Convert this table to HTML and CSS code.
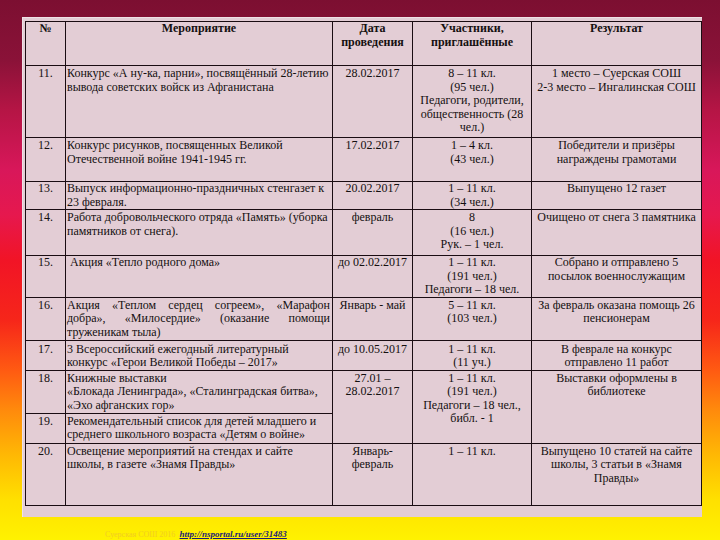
FILE: index.html
```html
<!DOCTYPE html>
<html lang="ru">
<head>
<meta charset="utf-8">
<title>Мероприятия</title>
<link rel="stylesheet" href="styles.css">
</head>
<body>
<div class="slide">
  <div class="panel">
    <table class="plan">
      <colgroup>
        <col class="c-num"><col class="c-event"><col class="c-date"><col class="c-who"><col class="c-res">
      </colgroup>
      <thead>
        <tr class="r-head">
          <th>№</th>
          <th>Мероприятие</th>
          <th>Дата<br>проведения</th>
          <th>Участники,<br>приглашённые</th>
          <th>Результат</th>
        </tr>
      </thead>
      <tbody>
        <tr class="r11">
          <td class="num">11.</td>
          <td class="ev">Конкурс «А ну-ка, парни», посвящённый 28-летию<br>вывода советских войск из Афганистана</td>
          <td class="ct">28.02.2017</td>
          <td class="ct">8 – 11 кл.<br>(95 чел.)<br>Педагоги, родители,<br>общественность (28<br>чел.)</td>
          <td class="ct">1 место – Суерская СОШ<br>2-3 место – Ингалинская СОШ</td>
        </tr>
        <tr class="r12">
          <td class="num">12.</td>
          <td class="ev">Конкурс рисунков, посвященных Великой<br>Отечественной войне 1941-1945 гг.</td>
          <td class="ct">17.02.2017</td>
          <td class="ct">1 – 4 кл.<br>(43 чел.)</td>
          <td class="ct">Победители и призёры<br>награждены грамотами</td>
        </tr>
        <tr class="r13">
          <td class="num">13.</td>
          <td class="ev">Выпуск информационно-праздничных стенгазет к<br>23 февраля.</td>
          <td class="ct">20.02.2017</td>
          <td class="ct">1 – 11 кл.<br>(34 чел.)</td>
          <td class="ct">Выпущено 12 газет</td>
        </tr>
        <tr class="r14">
          <td class="num">14.</td>
          <td class="ev">Работа добровольческого отряда «Память» (уборка<br>памятников от снега).</td>
          <td class="ct">февраль</td>
          <td class="ct">8<br>(16 чел.)<br>Рук. – 1 чел.</td>
          <td class="ct">Очищено от снега 3 памятника</td>
        </tr>
        <tr class="r15">
          <td class="num">15.</td>
          <td class="ev">&nbsp;Акция «Тепло родного дома»</td>
          <td class="ct">до 02.02.2017</td>
          <td class="ct">1 – 11 кл.<br>(191 чел.)<br>Педагоги – 18 чел.</td>
          <td class="ct">Собрано и отправлено 5<br>посылок военнослужащим</td>
        </tr>
        <tr class="r16">
          <td class="num">16.</td>
          <td class="ev"><span class="jl">Акция «Теплом сердец согреем», «Марафон</span><span class="jl">добра», «Милосердие» (оказание помощи</span><span class="ll">труженикам тыла)</span></td>
          <td class="ct">Январь - май</td>
          <td class="ct">5 – 11 кл.<br>(103 чел.)</td>
          <td class="ct">За февраль оказана помощь 26<br>пенсионерам</td>
        </tr>
        <tr class="r17">
          <td class="num">17.</td>
          <td class="ev">3 Всероссийский ежегодный литературный<br>конкурс «Герои Великой Победы – 2017»</td>
          <td class="ct">до 10.05.2017</td>
          <td class="ct">1 – 11 кл.<br>(11 уч.)</td>
          <td class="ct">В феврале на конкурс<br>отправлено 11 работ</td>
        </tr>
        <tr class="r18">
          <td class="num">18.</td>
          <td class="ev">Книжные выставки<br>«Блокада Ленинграда», «Сталинградская битва»,<br>«Эхо афганских гор»</td>
          <td class="ct" rowspan="2">27.01 –<br>28.02.2017</td>
          <td class="ct" rowspan="2">1 – 11 кл.<br>(191 чел.)<br>Педагоги – 18 чел.,<br>библ. - 1</td>
          <td class="ct" rowspan="2">Выставки оформлены в<br>библиотеке</td>
        </tr>
        <tr class="r19">
          <td class="num">19.</td>
          <td class="ev">Рекомендательный список для детей младшего и<br>среднего школьного возраста «Детям о войне»</td>
        </tr>
        <tr class="r20">
          <td class="num">20.</td>
          <td class="ev">Освещение мероприятий на стендах и сайте<br>школы, в газете «Знамя Правды»</td>
          <td class="ct">Январь-<br>февраль</td>
          <td class="ct">1 – 11 кл.</td>
          <td class="ct">Выпущено 10 статей на сайте<br>школы, 3 статьи в «Знамя<br>Правды»</td>
        </tr>
      </tbody>
    </table>
  </div>
  <div class="footer">
    <span class="credit">Суерская СОШ 2016</span>
    <a class="link" href="#">http://nsportal.ru/user/31483</a>
  </div>
</div>
</body>
</html>
```

FILE: styles.css
```css
html, body {
  margin: 0;
  padding: 0;
}

body {
  width: 720px;
  height: 540px;
  overflow: hidden;
  font-family: "Liberation Serif", "DejaVu Serif", serif;
}

.slide {
  width: 720px;
  height: 540px;
  overflow: hidden;
  background: linear-gradient(to bottom,
    #7c0f31 0px,
    #8a1238 60px,
    #b51545 110px,
    #d8175a 170px,
    #e6184e 215px,
    #f11426 260px,
    #f6261a 320px,
    #ff5a12 370px,
    #ff8a0c 410px,
    #ffb804 455px,
    #ffe000 500px,
    #fff200 540px);
}

.panel {
  box-sizing: border-box;
  margin: 17px 0 0 22px;
  width: 680px;
  height: 500px;
  padding: 4px 0 0 3px;
  background: #e3cdd5;
  box-shadow: inset 1px 1px 0 #efe2e6;
}

.plan {
  border-collapse: collapse;
  table-layout: fixed;
  width: 676px;
  font-family: "Liberation Serif", "DejaVu Serif", serif;
  font-size: 12px;
  line-height: 13.5px;
  color: #141010;
}

.c-num { width: 40px; }
.c-event { width: 267px; }
.c-date { width: 80px; }
.c-who { width: 119px; }
.c-res { width: 170px; }

.plan th,
.plan td {
  border: 1px solid #1a0c12;
  vertical-align: top;
  padding: 1px 2px 0 2px;
  overflow: visible;
  white-space: nowrap;
}

.plan th {
  font-weight: bold;
  text-align: center;
  padding-top: 0;
}

.plan td.num {
  text-align: center;
  padding-left: 0;
  padding-right: 0;
}

.plan td.ev {
  text-align: left;
  padding-left: 1px;
}

.plan td.ct {
  text-align: center;
  padding-left: 0;
  padding-right: 0;
}

.jl {
  display: block;
  text-align: justify;
  text-align-last: justify;
  white-space: normal;
}

.ll {
  display: block;
  text-align: left;
}

.r-head { height: 44px; }
.r11 { height: 72px; }
.r12 { height: 44px; }
.r13 { height: 28px; }
.r14 { height: 46px; }
.r15 { height: 41px; }
.r16 { height: 43px; }
.r17 { height: 29px; }
.r18 { height: 43px; }
.r19 { height: 30px; }
.r20 { height: 62px; }

.r13 td, .r15 td { padding-top: 0; }
.r17 td { padding-top: 2px; }
.r18 td, .r19 td { padding-top: 1px; }

.footer {
  margin-top: 12px;
  padding-left: 105px;
  font-family: "Liberation Serif", "DejaVu Serif", serif;
  font-size: 9px;
  line-height: 10px;
  white-space: nowrap;
}

.credit {
  font-size: 8px;
  color: #f2cc22;
  margin-right: 2px;
}

.link {
  color: #1c1c78;
  font-weight: bold;
  font-style: italic;
  text-decoration: underline;
}
```
